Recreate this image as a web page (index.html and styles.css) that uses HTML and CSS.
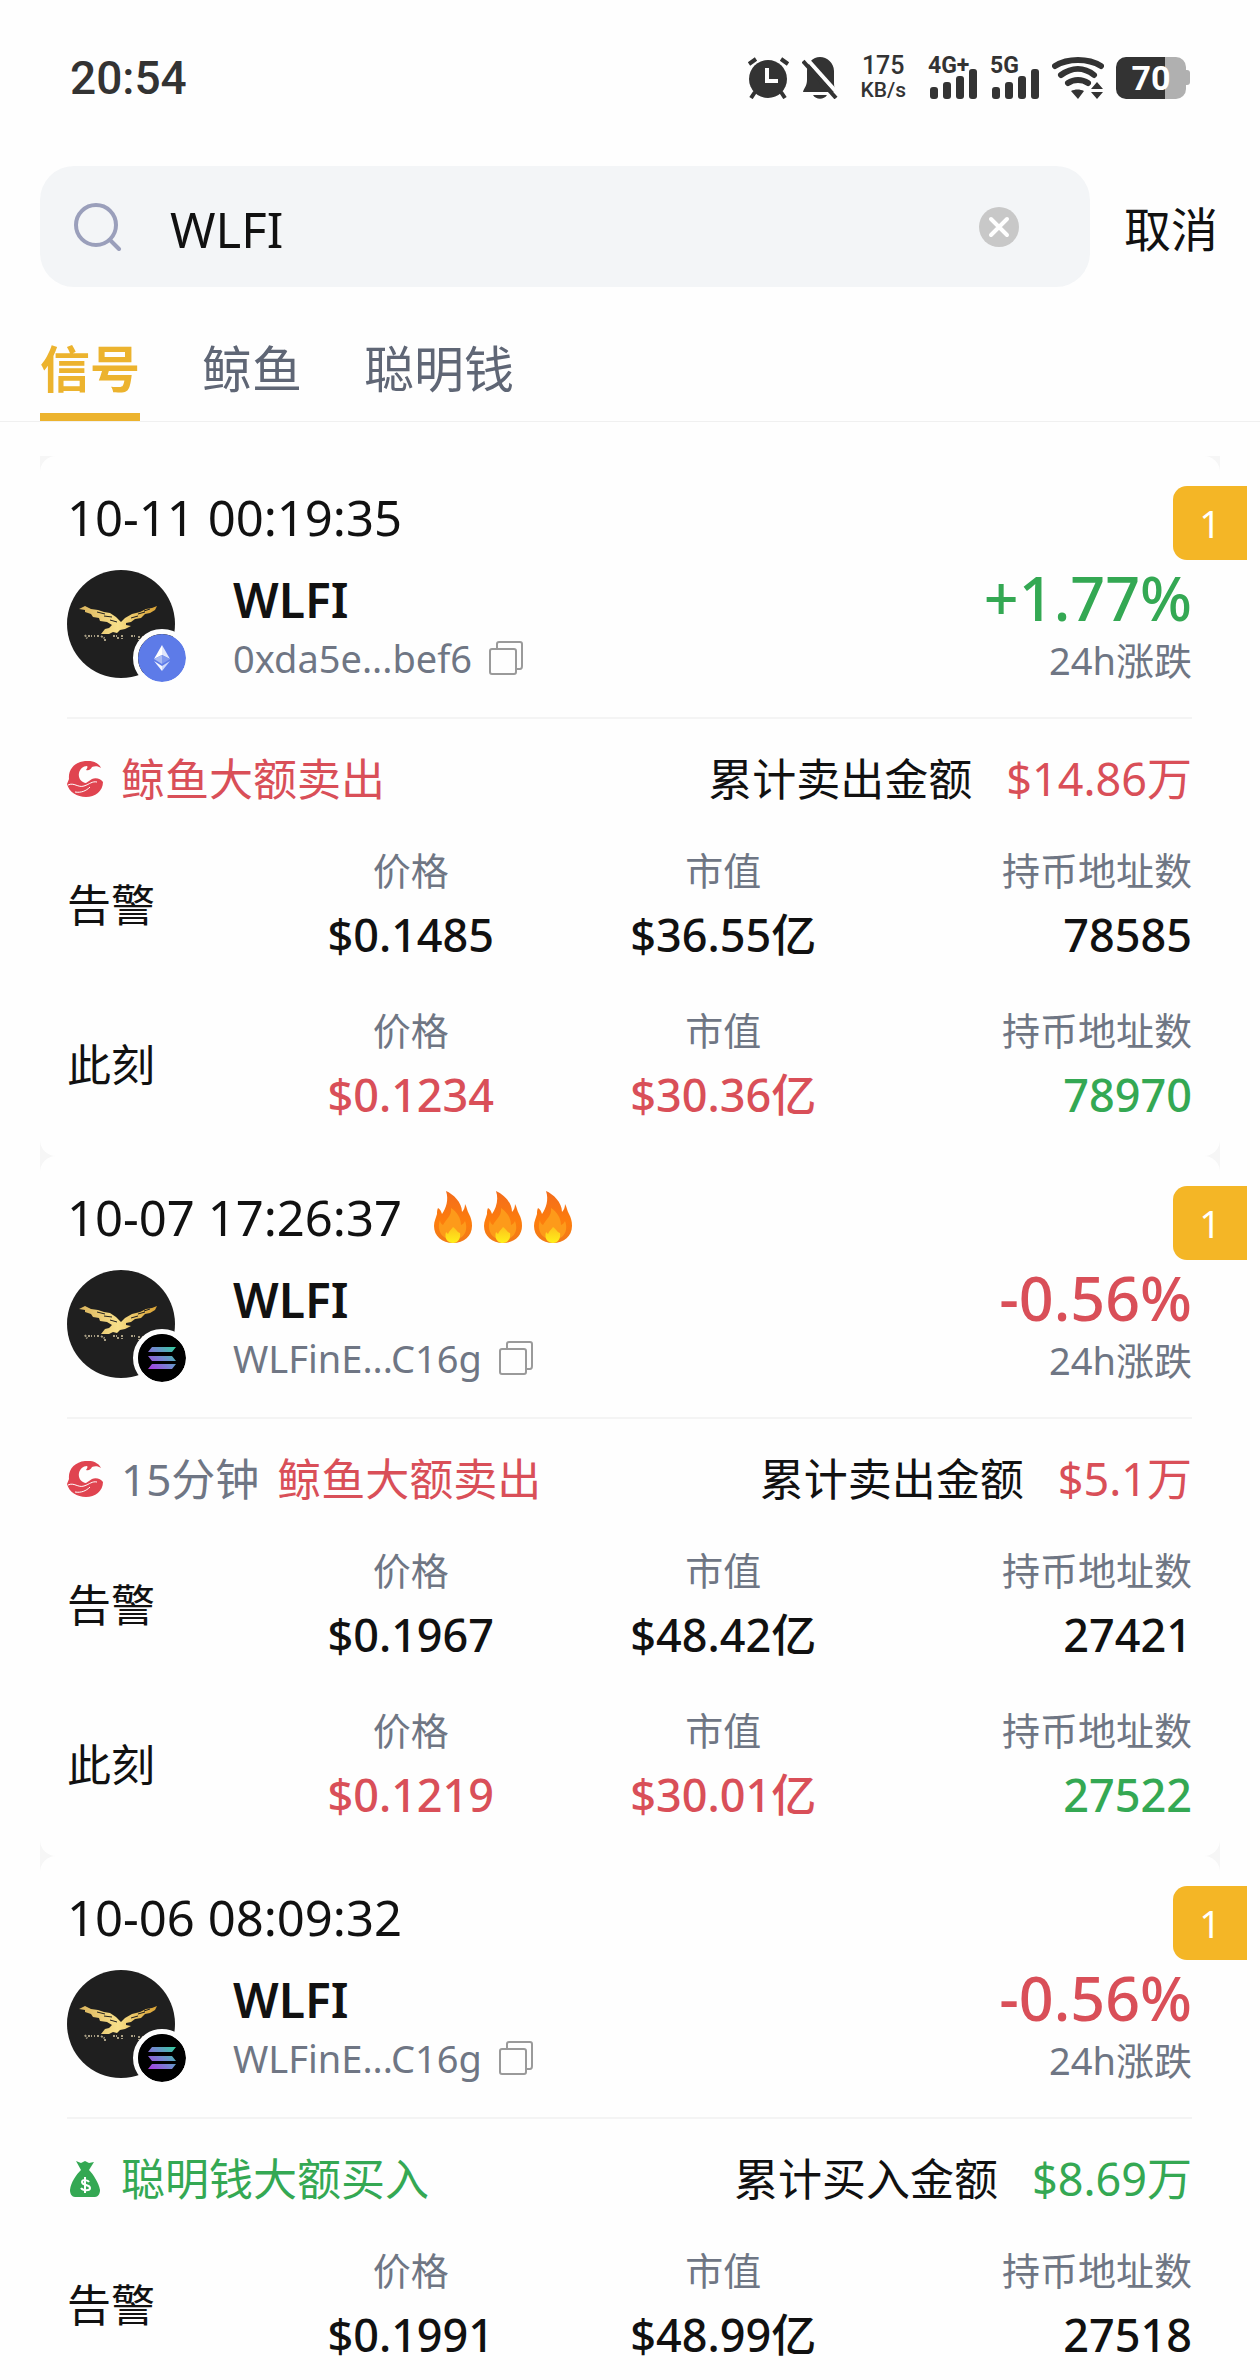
FILE: index.html
```html
<!DOCTYPE html>
<html lang="zh-CN">
<head>
    <meta charset="UTF-8">
    <meta name="viewport" content="width=device-width, initial-scale=1.0">
    <title>WLFI</title>
    <link rel="stylesheet" href="styles.css">
</head>
<body>

<!-- Shared icons -->
<svg class="sprite" aria-hidden="true">
    <defs>
        <linearGradient id="gold" x1="0" y1="0" x2="1" y2="0">
            <stop offset="0" stop-color="#d9b35c"/>
            <stop offset="0.5" stop-color="#f8e08a"/>
            <stop offset="1" stop-color="#d8a032"/>
        </linearGradient>
        <linearGradient id="solana" gradientUnits="userSpaceOnUse" x1="12" y1="36" x2="36" y2="12">
            <stop offset="0" stop-color="#a83be0"/>
            <stop offset="0.5" stop-color="#7486d0"/>
            <stop offset="1" stop-color="#35cfa0"/>
        </linearGradient>
        <linearGradient id="flame" x1="0" y1="0" x2="0" y2="1">
            <stop offset="0" stop-color="#f36c1c"/>
            <stop offset="0.6" stop-color="#fd7d0c"/>
            <stop offset="1" stop-color="#f07a1a"/>
        </linearGradient>
        <linearGradient id="flameCore" x1="0" y1="0" x2="0" y2="1">
            <stop offset="0" stop-color="#fdc21c"/>
            <stop offset="1" stop-color="#fff01a"/>
        </linearGradient>
    </defs>
    <symbol id="icon-eagle" viewBox="0 0 108 108">
        <circle cx="54" cy="54" r="54" fill="#1f1f1f"/>
        <path fill="url(#gold)" d="M18 36l6 3 7 1 6 2 6 1 6 4 5 5 4-4 7-4 8-2 6-3 6-1 5-2-2 4-5 3-5 1-4 4-6 1-4 3-5 1 0 2 5 1-6 3-5 1-3 3-4-1-4 2-8 0 4-5 4-1 3-3-5-3-7-1-1-3-6-1-2-3-6-2 0-2-6-1z"/>
        <path fill="none" stroke="#1f1f1f" d="M30 42l8 2M37 46l8 1M43 50l7 2M64 48l7-2M71 44l7-2M77 41l6-2"/>
        <path fill="none" stroke="#a89e84" stroke-width="2" stroke-dasharray="2 1 1 2" d="M18 65l3 5M21 66h7M30 66h3M34 66l3 2v2M37 70h3M46 66h5v4M55 65v5M64 66h6M72 66v4M76 66v4"/>
    </symbol>
    <symbol id="icon-eth" viewBox="0 0 48 48">
        <circle cx="24" cy="24" r="24" fill="#5d7be8"/>
        <path fill="#fff" d="M24 11l-8 14 8-4z"/>
        <path fill="#dfe6fb" d="M24 11l8 14-8-4z"/>
        <path fill="#a9bbf4" d="M24 21l-8 4 8 5z"/>
        <path fill="#7f98ee" d="M24 21l8 4-8 5z"/>
        <path fill="#f4f6fe" d="M16 27l8 5v5z"/>
        <path fill="#cdd8fa" d="M32 27l-8 5v5z"/>
    </symbol>
    <symbol id="icon-sol" viewBox="0 0 48 48">
        <circle cx="24" cy="24" r="24"/>
        <path fill="url(#solana)" d="M14 13h24l-4 5H10zM10 22h24l4 5H14zM14 30h24l-4 5H10z"/>
    </symbol>
    <symbol id="icon-copy" viewBox="0 0 36 36">
        <path fill="none" stroke="#9a9a9a" stroke-width="2" d="M9 8V4q0-2 2-2h21q2 0 2 2v22q0 3-2 3h-3M4 9h22q2 0 2 2v21q0 2-2 2H4q-2 0-2-2V11q0-2 2-2z"/>
    </symbol>
    <symbol id="icon-whale" viewBox="0 0 36 36">
        <path fill="#e04450" d="M18 0C8 1 1 8 2 18l-2 5c2 8 10 13 19 13s17-6 17-15c-2-3-7-5-11-3l-6 4c-5-1-8-5-7-10 1-4 4-7 8-7 1 1 0 3-1 4 3 1 5-1 6-3 3-1 6-1 9 1-2-5-9-8-16-7z"/>
        <path fill="none" stroke="#fff" d="M1 24c6-3 10 3 16 1s8-5 13-4M8 31c6 1 11-1 15-5"/>
    </symbol>
    <symbol id="icon-bag" viewBox="0 0 36 36">
        <path fill="#34a853" d="M9 0l5 2 4-2 4 2 5-1-5 8c4 4 10 13 11 20 0 4-2 7-5 7H8c-3 0-5-3-5-7 1-8 6-15 11-20z"/>
        <path fill="none" stroke="#fff" stroke-width="2" d="M22 21c-1-2-7-3-7 0 0 4 8 2 8 6 0 3-7 3-9 0M18 16v16"/>
    </symbol>
    <symbol id="icon-fire" viewBox="0 0 38 52">
        <path fill="url(#flame)" d="M12 0c7 3 16 11 16 21 2-2 3-5 3-8 2 3 2 7 4 10 2 4 3 7 3 12 0 10-8 17-19 17S0 45 0 35c0-5 2-8 3-12 0-2 0-4 1-6 2 1 3 3 4 6 4-6 7-14 4-23z"/>
        <path fill="#fd9a1a" d="M17 17c1 8-5 11-8 17-2-1-3-3-3-5-4 11 3 20 13 20s16-9 12-19c-1 2-2 3-4 4 0-7-4-13-10-17z"/>
        <path fill="url(#flameCore)" d="M19 36c3 2 5 6 7 6 1 5-2 10-7 10s-9-4-7-11l2 2c1-3 3-4 5-7z"/>
    </symbol>
    <symbol id="icon-bars" viewBox="0 0 48 30">
        <rect x="0" y="18" width="8" height="12" rx="3"/>
        <rect x="13" y="13" width="8" height="17" rx="3"/>
        <rect x="26" y="7" width="8" height="23" rx="3"/>
        <rect x="39" y="0" width="8" height="30" rx="3"/>
    </symbol>
</svg>

<header class="status-bar">
    <span class="clock">20:54</span>
    <div class="status-icons">
        <svg class="icon-alarm" viewBox="0 0 43 42" aria-hidden="true">
            <circle cx="21" cy="22" r="19"/>
            <path class="line" d="M2 7l7-5M41 7l-7-5M8 35l-4 6M34 35l4 6"/>
            <path class="cut" d="M20 11v13h11"/>
        </svg>
        <svg class="icon-bell" viewBox="0 0 36 42" aria-hidden="true">
            <path d="M18 0C11 0 5 6 5 14v9c0 6-3 8-4 12h34c-3-4-3-6-3-12v-9C32 6 25 0 18 0zM11 38h14c-3 5-11 5-14 0z"/>
            <path class="cut" d="M5 2l32 36"/>
            <path class="line" d="M1 4l33 37"/>
        </svg>
        <div class="speed"><span class="speed-value">175</span><span class="speed-unit">KB/s</span></div>
        <div class="signal"><span class="signal-type">4G+</span><svg aria-hidden="true"><use href="#icon-bars"/></svg></div>
        <div class="signal"><span class="signal-type">5G</span><svg aria-hidden="true"><use href="#icon-bars"/></svg></div>
        <svg class="icon-wifi" viewBox="0 0 52 42" aria-hidden="true">
            <path class="arc" d="M3 9c13-8 33-8 46 0M9 18c11-8 23-8 33 0M16 26c6-4 14-4 20 0"/>
            <path d="M19 34c4-2 9-2 13 0l-6 8zM39 35h12l-6 7zM39 32h12l-6-7z"/>
        </svg>
        <div class="battery"><span class="battery-level">70</span></div>
    </div>
</header>

<form class="search">
    <label class="search-box">
        <svg class="search-icon" viewBox="0 0 48 48" aria-hidden="true">
            <circle cx="22" cy="22" r="20"/>
            <path d="M36 37l9 9"/>
        </svg>
        <input type="text" class="search-input" value="WLFI" aria-label="搜索">
        <button type="reset" class="clear-button" aria-label="清除">
            <svg viewBox="0 0 40 40" aria-hidden="true">
                <circle cx="20" cy="20" r="20"/>
                <path d="M12 12l16 16M28 12L12 28"/>
            </svg>
        </button>
    </label>
    <button type="button" class="cancel-button">取消</button>
</form>

<nav class="tabs">
    <a href="#signal" class="tab active">信号</a>
    <a href="#whale" class="tab">鲸鱼</a>
    <a href="#smart" class="tab">聪明钱</a>
</nav>

<main class="card-list">
    <article class="card">
        <span class="badge">1</span>
        <div class="card-time"><time>10-11 00:19:35</time></div>
        <div class="token">
            <div class="avatar">
                <svg class="avatar-logo" aria-hidden="true"><use href="#icon-eagle"/></svg>
                <svg class="chain" aria-hidden="true"><use href="#icon-eth"/></svg>
            </div>
            <div class="token-info">
                <h2>WLFI</h2>
                <div class="address">0xda5e...bef6<button type="button" class="copy-button" aria-label="复制"><svg aria-hidden="true"><use href="#icon-copy"/></svg></button></div>
            </div>
            <div class="change">
                <strong class="up">+1.77%</strong>
                <span>24h涨跌</span>
            </div>
        </div>
        <div class="event">
            <svg class="event-icon" aria-hidden="true"><use href="#icon-whale"/></svg>
            <span class="down">鲸鱼大额卖出</span>
            <span class="total-label">累计卖出金额</span>
            <span class="total down">$14.86万</span>
        </div>
        <div class="stats">
            <h3>告警</h3>
            <dl><dt>价格</dt><dd>$0.1485</dd></dl>
            <dl><dt>市值</dt><dd>$36.55亿</dd></dl>
            <dl><dt>持币地址数</dt><dd>78585</dd></dl>
        </div>
        <div class="stats">
            <h3>此刻</h3>
            <dl><dt>价格</dt><dd class="down">$0.1234</dd></dl>
            <dl><dt>市值</dt><dd class="down">$30.36亿</dd></dl>
            <dl><dt>持币地址数</dt><dd class="up">78970</dd></dl>
        </div>
    </article>

    <article class="card">
        <span class="badge">1</span>
        <div class="card-time">
            <time>10-07 17:26:37</time>
            <div class="fires">
                <svg aria-hidden="true"><use href="#icon-fire"/></svg>
                <svg aria-hidden="true"><use href="#icon-fire"/></svg>
                <svg aria-hidden="true"><use href="#icon-fire"/></svg>
            </div>
        </div>
        <div class="token">
            <div class="avatar">
                <svg class="avatar-logo" aria-hidden="true"><use href="#icon-eagle"/></svg>
                <svg class="chain" aria-hidden="true"><use href="#icon-sol"/></svg>
            </div>
            <div class="token-info">
                <h2>WLFI</h2>
                <div class="address">WLFinE...C16g<button type="button" class="copy-button" aria-label="复制"><svg aria-hidden="true"><use href="#icon-copy"/></svg></button></div>
            </div>
            <div class="change">
                <strong class="down">-0.56%</strong>
                <span>24h涨跌</span>
            </div>
        </div>
        <div class="event">
            <svg class="event-icon" aria-hidden="true"><use href="#icon-whale"/></svg>
            <span class="period">15分钟</span>
            <span class="down">鲸鱼大额卖出</span>
            <span class="total-label">累计卖出金额</span>
            <span class="total down">$5.1万</span>
        </div>
        <div class="stats">
            <h3>告警</h3>
            <dl><dt>价格</dt><dd>$0.1967</dd></dl>
            <dl><dt>市值</dt><dd>$48.42亿</dd></dl>
            <dl><dt>持币地址数</dt><dd>27421</dd></dl>
        </div>
        <div class="stats">
            <h3>此刻</h3>
            <dl><dt>价格</dt><dd class="down">$0.1219</dd></dl>
            <dl><dt>市值</dt><dd class="down">$30.01亿</dd></dl>
            <dl><dt>持币地址数</dt><dd class="up">27522</dd></dl>
        </div>
    </article>

    <article class="card">
        <span class="badge">1</span>
        <div class="card-time"><time>10-06 08:09:32</time></div>
        <div class="token">
            <div class="avatar">
                <svg class="avatar-logo" aria-hidden="true"><use href="#icon-eagle"/></svg>
                <svg class="chain" aria-hidden="true"><use href="#icon-sol"/></svg>
            </div>
            <div class="token-info">
                <h2>WLFI</h2>
                <div class="address">WLFinE...C16g<button type="button" class="copy-button" aria-label="复制"><svg aria-hidden="true"><use href="#icon-copy"/></svg></button></div>
            </div>
            <div class="change">
                <strong class="down">-0.56%</strong>
                <span>24h涨跌</span>
            </div>
        </div>
        <div class="event">
            <svg class="event-icon" aria-hidden="true"><use href="#icon-bag"/></svg>
            <span class="up">聪明钱大额买入</span>
            <span class="total-label">累计买入金额</span>
            <span class="total up">$8.69万</span>
        </div>
        <div class="stats">
            <h3>告警</h3>
            <dl><dt>价格</dt><dd>$0.1991</dd></dl>
            <dl><dt>市值</dt><dd>$48.99亿</dd></dl>
            <dl><dt>持币地址数</dt><dd>27518</dd></dl>
        </div>
    </article>
</main>

</body>
</html>
```
FILE: styles.css
```css
* {
    box-sizing: border-box;
}

body {
    font-family: "Noto Sans", "Noto Sans CJK SC", sans-serif;
    margin: 0;
    background-color: #fefefe;
    color: #111;
}

h2, h3, dl, dd {
    margin: 0;
}

button {
    padding: 0;
    border: none;
    background: none;
    font-family: inherit;
    color: inherit;
    cursor: pointer;
}

svg {
    display: block;
}

.sprite {
    position: absolute;
    width: 0;
    height: 0;
}

.up {
    color: #34a853;
}

.down {
    color: #d94f58;
}

/* Status bar */
.status-bar {
    display: flex;
    justify-content: space-between;
    align-items: center;
    height: 156px;
    padding: 0 70px;
    font-family: Roboto, sans-serif;
    color: #333;
}

.clock {
    font-size: 46px;
    font-weight: 500;
}

.status-icons {
    display: flex;
    align-items: center;
    gap: 12px;
    fill: #333;
}

.status-icons .line, .status-icons .cut, .status-icons .arc {
    fill: none;
    stroke: #333;
    stroke-width: 4;
}

.status-icons .cut {
    stroke: #fefefe;
}

.status-icons .arc {
    stroke-width: 6;
    stroke-linecap: round;
}

.icon-alarm {
    width: 43px;
    height: 42px;
}

.icon-bell {
    width: 36px;
    height: 42px;
}

.speed {
    display: flex;
    flex-direction: column;
    align-items: center;
    margin: 0 10px;
    font-weight: 500;
}

.speed-value {
    font-size: 25px;
    line-height: 24px;
}

.speed-unit {
    font-size: 21px;
    line-height: 24px;
}

.signal {
    position: relative;
    width: 50px;
    height: 42px;
    padding: 12px 0 0 2px;
}

.signal svg {
    width: 48px;
    height: 30px;
}

.signal-type {
    position: absolute;
    top: 0;
    left: 0;
    font-size: 23px;
    font-weight: 700;
    line-height: 18px;
}

.icon-wifi {
    width: 52px;
    height: 42px;
}

.battery {
    position: relative;
    width: 70px;
    height: 42px;
    margin-right: 4px;
    border-radius: 10px;
    background: linear-gradient(to right, #333 70%, #b0b0b0 70%);
    text-align: center;
}

.battery::after {
    content: "";
    position: absolute;
    top: 13px;
    right: -4px;
    width: 4px;
    height: 15px;
    border-radius: 0 3px 3px 0;
    background-color: #b0b0b0;
}

.battery-level {
    font-size: 34px;
    font-weight: 700;
    line-height: 42px;
    color: #fff;
}

/* Search */
.search {
    display: flex;
    align-items: center;
    gap: 34px;
    margin: 10px 42px 0 40px;
}

.search-box {
    display: flex;
    flex: 1;
    align-items: center;
    height: 121px;
    padding: 0 71px 0 34px;
    border-radius: 34px;
    background-color: #f3f5f7;
}

.search-icon {
    width: 48px;
    height: 48px;
    fill: none;
    stroke: #9a9fbb;
    stroke-width: 4;
    stroke-linecap: round;
}

.search-input {
    flex: 1;
    min-width: 0;
    margin-left: 48px;
    padding: 4px 0 0;
    border: none;
    outline: none;
    background: none;
    font-family: inherit;
    font-size: 49px;
    color: #111;
}

.clear-button svg {
    width: 40px;
    height: 40px;
    fill: #c8c8c8;
    stroke: #fff;
    stroke-width: 4;
    stroke-linecap: round;
}

.clear-button circle {
    stroke: none;
}

.cancel-button {
    font-size: 47px;
}

/* Tabs */
.tabs {
    display: flex;
    gap: 62px;
    margin-top: 48px;
    padding: 0 40px;
    border-bottom: 1px solid #f0f0f0;
}

.tab {
    padding-bottom: 10px;
    border-bottom: 8px solid transparent;
    font-size: 50px;
    line-height: 68px;
    color: #5f6675;
    text-decoration: none;
}

.tab.active {
    border-bottom-color: #ecb32e;
    font-weight: 600;
    color: #ecb32e;
}

/* Signal cards */
.card-list {
    margin: 34px 40px 0;
    background-color: #f6f6f6;
}

.card {
    position: relative;
    padding: 35px 28px 35px 27px;
    border-radius: 16px;
    background-color: #fefefe;
}

.card:last-child {
    padding-bottom: 19px;
    border-radius: 16px 16px 0 0;
}

.badge {
    position: absolute;
    top: 30px;
    right: -27px;
    width: 74px;
    border-radius: 14px 0 0 14px;
    background-color: #f4b626;
    font-size: 38px;
    line-height: 74px;
    text-align: center;
    color: #fff;
}

.card-time {
    display: flex;
    align-items: center;
    gap: 32px;
    height: 52px;
    margin-bottom: 27px;
    font-size: 49px;
    line-height: 52px;
}

.fires {
    display: flex;
    gap: 12px;
}

.fires svg {
    width: 38px;
    height: 52px;
}

.token {
    display: flex;
    height: 149px;
    border-bottom: 2px solid #f4f4f4;
    line-height: 60px;
}

.avatar {
    position: relative;
    width: 108px;
    height: 108px;
}

.avatar-logo {
    width: 108px;
    height: 108px;
}

.chain {
    position: absolute;
    right: -16px;
    bottom: -9px;
    width: 58px;
    height: 58px;
    border: 5px solid #fefefe;
    border-radius: 50%;
}

.token-info {
    margin-left: 58px;
}

.token-info h2 {
    font-size: 48px;
    font-weight: 600;
}

.address {
    display: flex;
    align-items: center;
    gap: 16px;
    font-size: 38px;
    line-height: 56px;
    color: #6f7684;
}

.copy-button svg {
    width: 36px;
    height: 36px;
}

.change {
    display: flex;
    flex-direction: column;
    align-items: flex-end;
    gap: 4px;
    margin-left: auto;
}

.change strong {
    font-size: 61px;
    font-weight: 500;
    line-height: 56px;
}

.change span {
    font-size: 38px;
    color: #6f7684;
}

.event {
    display: flex;
    align-items: center;
    gap: 18px;
    padding: 30px 0 35px;
    font-size: 44px;
    line-height: 60px;
}

.event-icon {
    width: 36px;
    height: 36px;
}

.period {
    color: #6f7684;
}

.total-label {
    margin-left: auto;
    margin-right: 16px;
}

.total {
    font-size: 45px;
}

.stats {
    display: grid;
    grid-template-columns: 3fr 5fr 5fr 5fr;
    align-items: center;
    line-height: 52px;
    text-align: center;
}

.stats + .stats {
    margin-top: 43px;
}

.stats h3 {
    padding-top: 4px;
    font-size: 44px;
    font-weight: 400;
    text-align: left;
}

.stats dl:last-child {
    text-align: right;
}

.stats dt {
    margin-bottom: 13px;
    font-size: 38px;
    color: #6f7684;
}

.stats dd {
    font-size: 45px;
    font-weight: 500;
}
```
